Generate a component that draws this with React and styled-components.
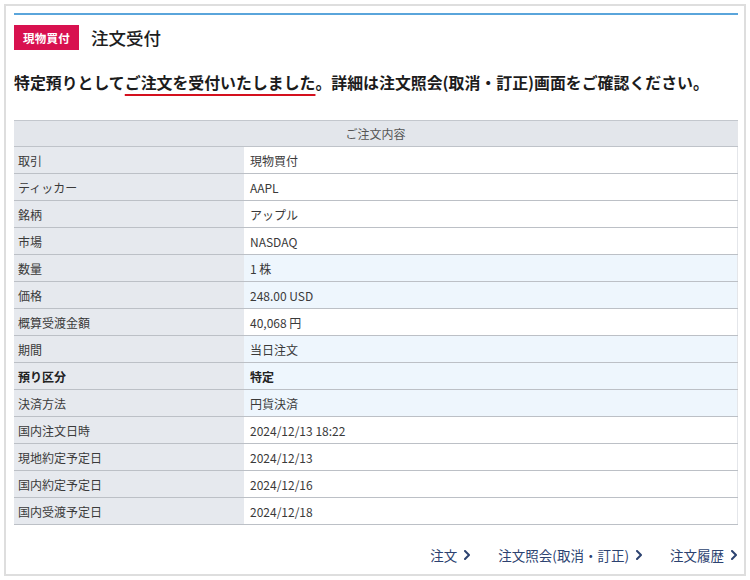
import React from "react";
import styled, { createGlobalStyle } from "styled-components";

const GlobalStyle = createGlobalStyle`
  html, body {
    margin: 0;
    padding: 0;
    background: #fff;
  }
  body {
    font-family: "Noto Sans CJK JP", "Noto Sans", sans-serif;
    color: #222;
  }
`;

const rows = [
  { label: "取引", value: "現物買付" },
  { label: "ティッカー", value: "AAPL" },
  { label: "銘柄", value: "アップル" },
  { label: "市場", value: "NASDAQ" },
  { label: "数量", value: "1 株", tint: true },
  { label: "価格", value: "248.00 USD", tint: true },
  { label: "概算受渡金額", value: "40,068 円" },
  { label: "期間", value: "当日注文", tint: true },
  { label: "預り区分", value: "特定", tint: true, strong: true },
  { label: "決済方法", value: "円貨決済", tint: true },
  { label: "国内注文日時", value: "2024/12/13 18:22" },
  { label: "現地約定予定日", value: "2024/12/13" },
  { label: "国内約定予定日", value: "2024/12/16" },
  { label: "国内受渡予定日", value: "2024/12/18" },
];

const links = ["注文", "注文照会(取消・訂正)", "注文履歴"];

export default function App() {
  return (
    <Page>
      <GlobalStyle />
      <Frame>
        <TopRule />
        <Heading>
          <Badge>現物買付</Badge>
          <Title>注文受付</Title>
        </Heading>
        <Message>
          特定預りとして<Marked>ご注文を受付いたしました</Marked>。詳細は注文照会(取消・訂正)画面をご確認ください。
        </Message>
        <OrderTable>
          <colgroup>
            <LabelCol />
            <col />
          </colgroup>
          <thead>
            <tr>
              <HeadCell colSpan={2}>ご注文内容</HeadCell>
            </tr>
          </thead>
          <tbody>
            {rows.map((r) => (
              <Row key={r.label}>
                <LabelCell $strong={r.strong}>{r.label}</LabelCell>
                <ValueCell $tint={r.tint} $strong={r.strong}>
                  {r.value}
                </ValueCell>
              </Row>
            ))}
          </tbody>
        </OrderTable>
        <Footer>
          {links.map((l) => (
            <NavLink key={l} href="#">
              {l}
              <Chevron viewBox="0 0 6 10" aria-hidden="true">
                <polyline points="1,1 5,5 1,9" />
              </Chevron>
            </NavLink>
          ))}
        </Footer>
      </Frame>
    </Page>
  );
}

const Page = styled.div`
  padding: 4px;
  box-sizing: border-box;
  width: 750px;
  height: 580px;
`;

const Frame = styled.div`
  box-sizing: border-box;
  height: 572px;
  border: 2px solid #dedede;
  padding: 7px 5px 0 8px;
  display: flex;
  flex-direction: column;
`;

const TopRule = styled.div`
  height: 2px;
  background: #5aa5db;
  margin-right: 1px;
`;

const Heading = styled.div`
  display: flex;
  align-items: center;
  gap: 12px;
  margin-top: 10px;
`;

const Badge = styled.span`
  display: inline-flex;
  align-items: center;
  justify-content: center;
  width: 65px;
  height: 25px;
  background: #d8114f;
  color: #fff;
  font-size: 11.5px;
  font-weight: 700;
  letter-spacing: 0.2px;
`;

const Title = styled.h1`
  margin: 0;
  font-size: 17.5px;
  font-weight: 500;
  color: #1e1e1e;
  line-height: 25px;
`;

const Message = styled.p`
  margin: 22px 0 0;
  font-size: 15.9px;
  font-weight: 700;
  line-height: 22px;
  color: #1c1c1c;
  white-space: nowrap;
`;

const Marked = styled.span`
  text-decoration-line: underline;
  text-decoration-color: #d4101e;
  text-decoration-thickness: 2px;
  text-underline-offset: 5px;
`;

const OrderTable = styled.table`
  margin-top: 26px;
  width: calc(100% - 1px);
  border-collapse: collapse;
  table-layout: fixed;
  font-size: 12px;
  color: #333;
  border-right: 1px solid #e4e6ea;
`;

const LabelCol = styled.col`
  width: 230px;
`;

const HeadCell = styled.th`
  height: 25px;
  padding: 0;
  background: #e3e6eb;
  border-top: 1px solid #c3c7cd;
  border-bottom: 1px solid #bfc3c9;
  font-weight: 400;
  color: #555;
  text-align: center;
`;

const Row = styled.tr`
  height: 27px;
  border-bottom: 1px solid #bcc0c6;
`;

const LabelCell = styled.td`
  padding: 0 0 0 4px;
  background: #e6e9ee;
  font-weight: ${(p) => (p.$strong ? 700 : 400)};
  color: ${(p) => (p.$strong ? "#222" : "#3a3a3a")};
`;

const ValueCell = styled.td`
  padding: 0 0 0 6px;
  background: ${(p) => (p.$tint ? "#eef6fd" : "#fff")};
  font-weight: ${(p) => (p.$strong ? 700 : 400)};
  color: ${(p) => (p.$strong ? "#222" : "#3a3a3a")};
`;

const Footer = styled.nav`
  margin-top: auto;
  display: flex;
  justify-content: flex-end;
  gap: 28px;
  padding: 0 2px 9px 0;
`;

const NavLink = styled.a`
  display: inline-flex;
  align-items: center;
  gap: 7px;
  font-size: 13.5px;
  line-height: 20px;
  color: #2c4270;
  text-decoration: none;
`;

const Chevron = styled.svg`
  width: 6px;
  height: 10px;
  fill: none;
  stroke: #2c4270;
  stroke-width: 2;
  stroke-linecap: round;
  stroke-linejoin: round;
`;
